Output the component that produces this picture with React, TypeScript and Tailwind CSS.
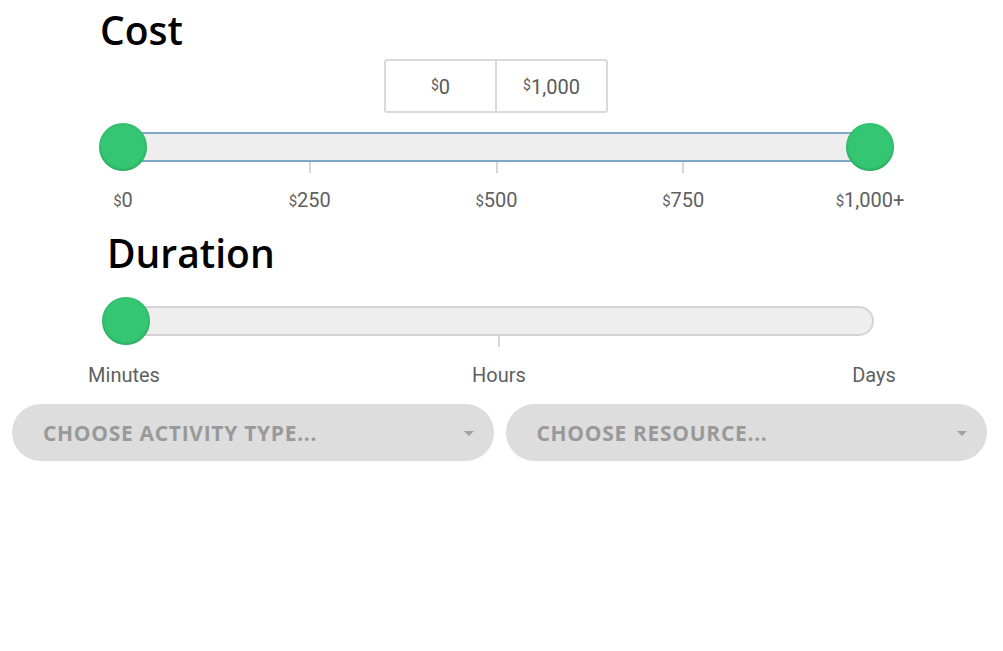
import React from "react";

const ROBOTO = { fontFamily: 'Roboto, "Liberation Sans", Arial, sans-serif' };
const OPEN = { fontFamily: '"Open Sans", "Liberation Sans", sans-serif' };

function Money({ v, big = false }: { v: string; big?: boolean }) {
  return (
    <span className="whitespace-nowrap">
      <span className={big ? "text-[14px] align-[4px]" : "text-[15px] align-[1px]"}>$</span>
      <span>{v}</span>
    </span>
  );
}

function Knob({ side }: { side: "left" | "right" | "leftInset" }) {
  const pos =
    side === "left"
      ? "left-0 -translate-x-1/2"
      : side === "right"
      ? "right-0 translate-x-1/2"
      : "left-[2px] -translate-x-1/2";
  return (
    <div
      className={`absolute top-0 h-[48px] w-[48px] rounded-full bg-[#34c672] shadow-[inset_0_-1px_3px_rgba(0,80,30,0.35)] ${pos}`}
    />
  );
}

function Slider({
  ticks,
  border,
  extendLeft = false,
  knobs,
}: {
  ticks: number;
  border: string;
  extendLeft?: boolean;
  knobs: ("left" | "right" | "leftInset")[];
}) {
  return (
    <div className="relative flex flex-col pt-[9px]">
      <div className={`h-[30px] rounded-full border-2 bg-[#eeeeee] ${border} ${extendLeft ? "-ml-[14px]" : ""}`} />
      <div className="flex h-[11px] justify-between">
        {Array.from({ length: ticks }).map((_, i) => (
          <div
            key={i}
            className={`flex w-0 justify-center ${i === 0 || i === ticks - 1 ? "invisible" : ""}`}
          >
            <div className="h-[11px] w-[2px] shrink-0 bg-[#d6d6d6]" />
          </div>
        ))}
      </div>
      {knobs.map((k) => (
        <Knob key={k} side={k} />
      ))}
    </div>
  );
}

function Labels({ items }: { items: React.ReactNode[] }) {
  return (
    <div className="flex justify-between text-[20px] leading-[20px] text-[#606060]" style={ROBOTO}>
      {items.map((it, i) => (
        <div key={i} className="flex w-0 justify-center whitespace-nowrap">
          {it}
        </div>
      ))}
    </div>
  );
}

export default function App() {
  return (
    <div className="h-[651px] w-[1003px] overflow-hidden bg-white">
      {/* Cost */}
      <h2 className="ml-[100px] pt-[10px] text-[39px] leading-[39px] font-semibold text-black" style={OPEN}>
        Cost
      </h2>
      <div
        className="mt-[10px] ml-[384px] flex h-[54px] w-[224px] rounded-[3px] border-2 border-[#dadada] text-[20px] text-[#5a5a5a]"
        style={ROBOTO}
      >
        <div className="flex flex-1 items-center justify-center border-r-2 border-[#dadada] pt-[2px]">
          <Money v="0" big />
        </div>
        <div className="flex flex-1 items-center justify-center pt-[2px]">
          <Money v="1,000" big />
        </div>
      </div>
      <div className="mt-[10px] ml-[123px] w-[747px]">
        <Slider ticks={5} border="border-[#7fa7ca]" knobs={["left", "right"]} />
        <div className="mt-[17px]">
          <Labels items={["0", "250", "500", "750", "1,000+"].map((v) => <Money key={v} v={v} />)} />
        </div>
      </div>

      {/* Duration */}
      <h2 className="mt-[22px] ml-[107px] text-[39px] leading-[39px] font-semibold text-black" style={OPEN}>
        Duration
      </h2>
      <div className="mt-[25px] ml-[124px] w-[750px]">
        <Slider ticks={3} border="border-[#d4d4d4]" extendLeft knobs={["leftInset"]} />
        <div className="mt-[18px]">
          <Labels items={["Minutes", "Hours", "Days"]} />
        </div>
      </div>

      {/* Dropdowns */}
      <div className="mt-[19px] flex gap-[12px] pl-[12px] pr-[16px]" style={OPEN}>
        {["CHOOSE ACTIVITY TYPE...", "CHOOSE RESOURCE..."].map((t) => (
          <div
            key={t}
            className="flex h-[57px] flex-1 items-center justify-between rounded-full bg-[#dddddd] pt-[2px] pl-[31px] pr-[20px]"
          >
            <span className="text-[21px] font-bold tracking-[0.7px] text-[#999999]">{t}</span>
            <svg width="10" height="6" viewBox="0 0 10 6">
              <path d="M0 0 L10 0 L5 5 Z" fill="#a0a0a0" />
            </svg>
          </div>
        ))}
      </div>
    </div>
  );
}
